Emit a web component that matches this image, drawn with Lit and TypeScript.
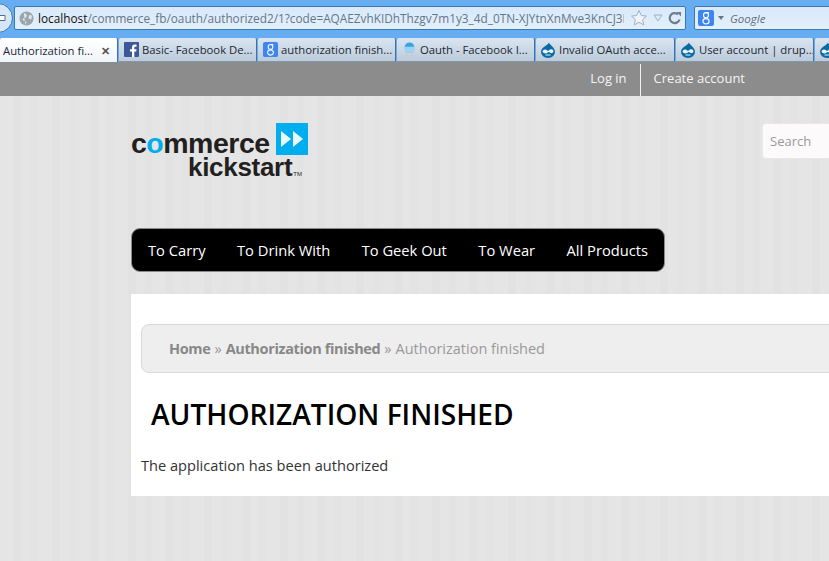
import { LitElement, css, html, svg } from 'lit';
import { customElement } from 'lit/decorators.js';

const facebookIcon = html`<svg class="fav" viewBox="0 0 16 16"><rect width="16" height="16" rx="1" fill="#3b5998"/><path d="M11 16V10h2l.4-2.400H11V6.200c0-.8.3-1.200 1.200-1.200h1.200V2.800c-.5-.1-1.200-.1-1.900-.1-1.900 0-3 1.100-3 3.100v1.800H6.400V10h2.100v6z" fill="#fff"/></svg>`;

const googleIcon = html`<svg class="fav" viewBox="0 0 16 16"><rect width="16" height="16" rx="2" fill="#3f85f0"/><ellipse cx="8" cy="5.200" rx="2.500" ry="2.600" fill="none" stroke="#fff" stroke-width="1.100"/><ellipse cx="8" cy="11.300" rx="3.100" ry="2.700" fill="none" stroke="#fff" stroke-width="1.100"/><path d="M8 2.600h3" stroke="#fff" stroke-width="1"/></svg>`;

const cartIcon = html`<svg class="fav" viewBox="0 0 16 16"><path d="M3 5a5 4.500 0 0 1 10 0l-1 6H4z" fill="#35a3e0"/><path d="M2 5h12l-1.500 6h-9z" fill="#9fd4f0"/><path d="M4 12.500h8" stroke="#c9d3dc"/><circle cx="5" cy="14.500" r="1.200" fill="#c2cad2"/><circle cx="11" cy="14.500" r="1.200" fill="#c2cad2"/></svg>`;

const drupalIcon = html`<svg class="fav drupal" viewBox="0 0 16 16"><path d="M9 .5c.3 2.500 6 4.500 6 9.500a7 6 0 0 1-14 0C1 5 8 3.500 9 .5z" fill="#0a6aa3"/><path d="M2.500 10c0-2 2-3.300 3.700-2.200L8 9l2-1.400c2-1 3.800.6 3.500 2.400-.9 1.300-2.500 1.500-3.500.5-.8-.7-1.500-.7-2.200 0-1.200 1.200-4 1.300-5.300-.5z" fill="#e8f2f8"/><path d="M5.500 13h5" stroke="#e8f2f8" stroke-width="1.200"/></svg>`;

const tabs = [
  { title: 'Basic- Facebook De...', icon: facebookIcon, width: 139 },
  { title: 'authorization finish...', icon: googleIcon, width: 139 },
  { title: 'Oauth - Facebook I...', icon: cartIcon, width: 139 },
  { title: 'Invalid OAuth acce...', icon: drupalIcon, width: 140 },
  { title: 'User account | drup...', icon: drupalIcon, width: 139 },
  { title: '', icon: drupalIcon, width: 40 },
];

const menu = ['To Carry', 'To Drink With', 'To Geek Out', 'To Wear', 'All Products'];

@customElement('app-root')
export class AppRoot extends LitElement {
  static override styles = css`
    :host {
      display: block;
      width: 829px;
      height: 561px;
      overflow: hidden;
      font-family: 'Open Sans', 'Liberation Sans', sans-serif;
      background: repeating-linear-gradient(90deg, #e5e5e5 0 14px, #e2e2e2 14px 22px, #e5e5e5 22px 31px, #e3e3e3 31px 38px);
    }

    /* browser chrome */
    .toolbar {
      height: 38px;
      box-sizing: border-box;
      padding: 6px 0 0 14px;
      display: flex;
      gap: 8px;
      background: #66aef1;
      position: relative;
      overflow: hidden;
    }
    .back {
      position: absolute;
      left: -17px;
      top: 3px;
      width: 30px;
      height: 30px;
      box-sizing: border-box;
      border-radius: 50%;
      border: 1px solid #3f78ad;
      background: #d5e6f7;
      display: flex;
      align-items: center;
      justify-content: center;
    }
    .address,
    .websearch {
      height: 24px;
      box-sizing: border-box;
      border: 1px solid #3b78ad;
      border-radius: 2px;
      background: linear-gradient(#d9e9f9, #e4f0fb);
      display: flex;
      align-items: center;
    }
    .address {
      width: 672px;
      padding: 0 4px;
      flex: none;
    }
    .globe {
      flex: none;
      margin-right: 4px;
    }
    .url {
      flex: none;
      width: 586px;
      overflow: hidden;
      white-space: nowrap;
      font-size: 11.800px;
      color: #64778a;
    }
    .url b {
      font-weight: 400;
      color: #111;
    }
    .url-icons {
      display: flex;
      align-items: center;
      gap: 5px;
      margin-left: 6px;
    }
    .websearch {
      flex: 1;
      margin-right: -4px;
      padding-left: 3px;
      gap: 4px;
    }
    .websearch .fav {
      width: 16px;
      height: 16px;
    }
    .caret {
      width: 0;
      height: 0;
      border: 3px solid transparent;
      border-top: 4px solid #66788a;
      border-bottom: 0;
    }
    .websearch i {
      margin-left: 2px;
      font-size: 11.500px;
      color: #5f6f7f;
    }
    .tabstrip {
      height: 24px;
      display: flex;
      background: #66aef1;
      overflow: hidden;
    }
    .tab {
      flex: none;
      box-sizing: border-box;
      height: 24px;
      padding: 0 0 0 5px;
      display: flex;
      align-items: center;
      gap: 3px;
      font-size: 11.300px;
      white-space: nowrap;
      overflow: hidden;
      color: #1c2733;
      background: linear-gradient(#dae5f0, #bccbda);
      border-right: 1px solid #44729c;
      border-bottom: 1px solid #8097ad;
      border-radius: 2px 2px 0 0;
      margin-right: 1px;
    }
    .tab.active {
      width: 118px;
      padding-left: 3px;
      justify-content: space-between;
      background: linear-gradient(#fff, #f0f5fa);
      border-bottom: 0;
    }
    .close {
      margin-right: 7px;
      font-size: 11px;
      font-weight: 700;
      color: #555;
    }
    .fav {
      flex: none;
      width: 15px;
      height: 15px;
    }
    .drupal {
      width: 16px;
      height: 16px;
      margin-left: -1px;
    }

    /* site */
    .userbar {
      height: 34px;
      box-sizing: border-box;
      padding: 2px 71px 0 0;
      background: #8c8c8c;
      display: flex;
      justify-content: flex-end;
      font-size: 13px;
      color: #f4f4f4;
    }
    .userbar a {
      display: flex;
      align-items: center;
      padding: 0 13px 5px;
    }
    .userbar a + a {
      border-left: 1px solid #f2f2f2;
    }
    .header {
      height: 132px;
      box-sizing: border-box;
      padding: 27px 0 0 131px;
      display: flex;
      justify-content: space-between;
      align-items: flex-start;
    }
    .logo {
      display: grid;
      grid-template-columns: auto auto;
      width: 177px;
      font-family: 'Liberation Sans', Arial, sans-serif;
      font-weight: 700;
      color: #231f20;
    }
    .logo .commerce {
      margin-top: 5px;
      font-size: 28.500px;
      line-height: 30px;
      letter-spacing: -0.500px;
    }
    .logo .commerce span {
      color: #00aeef;
    }
    .logo svg {
      justify-self: end;
      width: 32px;
      height: 32px;
    }
    .logo .kickstart {
      grid-column: 1 / 3;
      margin: -5px 0 0 57px;
      font-size: 26px;
      line-height: 28px;
      letter-spacing: -0.300px;
    }
    .logo sup {
      font-size: 6px;
      font-weight: 400;
      letter-spacing: 0;
      margin-left: 1px;
      vertical-align: baseline;
    }
    .search {
      flex: none;
      width: 67px;
      height: 36px;
      box-sizing: border-box;
      padding-left: 7px;
      display: flex;
      align-items: center;
      font-size: 13px;
      color: #999;
      background: #fcfafb;
      border: 1px solid #e8e8e8;
      border-right: 0;
      border-radius: 4px 0 0 4px;
    }
    .menu {
      margin-left: 131px;
      width: 534px;
      height: 44px;
      box-sizing: border-box;
      padding-left: 16px;
      display: flex;
      align-items: center;
      gap: 31.500px;
      background: #000;
      border: 1px solid #8a8a8a;
      border-radius: 9px;
      color: #fff;
      font-size: 14.700px;
      white-space: nowrap;
    }
    .content {
      margin: 22px 0 0 131px;
      height: 202px;
      box-sizing: border-box;
      padding: 30px 0 0 10px;
      background: #fff;
      color: #333;
    }
    .breadcrumb {
      width: 720px;
      height: 49px;
      box-sizing: border-box;
      padding-left: 27px;
      display: flex;
      align-items: center;
      gap: 4px;
      white-space: pre;
      font-size: 14.500px;
      color: #999;
      background: #eee;
      border: 1px solid #d9d9d9;
      border-radius: 8px;
    }
    .breadcrumb b {
      color: #888;
      letter-spacing: -0.360px;
    }
    h1 {
      margin: 23px 0 0 10px;
      font-size: 28.100px;
      line-height: 37px;
      font-weight: 600;
      color: #000;
      text-transform: uppercase;
      white-space: nowrap;
    }
    p {
      margin: 22px 0 0;
      font-size: 14.600px;
      line-height: 20px;
    }
  `;

  override render() {
    return html`
      <div class="toolbar">
        <div class="back">
          <svg width="16" height="14" viewBox="0 0 16 14"><path d="M7 1 1 7l6 6V9.500h8v-5H7z" fill="#fff" stroke="#4a6f92"/></svg>
        </div>
        <div class="address">
          <svg class="globe" width="15" height="15" viewBox="0 0 16 16">
            <circle cx="8" cy="8" r="7.500" fill="#9aa5ae"/>
            <path d="M5 2c3 1 4 2 3 4S4 7 4 9s3 1 4 3l-1 3.300M11 4l3 1-1 4-3-1z" fill="#dfe6ec"/>
          </svg>
          <div class="url"><b>localhost</b>/commerce_fb/oauth/authorized2/1?code=AQAEZvhKIDhThzgv7m1y3_4d_0TN-XJYtnXnMve3KnCJ3IW</div>
          <div class="url-icons">
            <svg width="18" height="18" viewBox="0 0 18 18"><path d="m9 1.500 2.300 5 5.200.6-3.800 3.500 1 5.300L9 13.300l-4.700 2.600 1-5.300L1.500 7.100l5.200-.6z" fill="#eef4fa" stroke="#9fb0bf"/></svg>
            <svg width="10" height="8" viewBox="0 0 10 8"><path d="M1 1h8L5 7z" fill="none" stroke="#9fb0bf"/></svg>
            <svg width="14" height="14" viewBox="0 0 14 14"><path d="M11.500 8.500A5 5 0 1 1 10 3.300" fill="none" stroke="#6d7d8c" stroke-width="2.200"/><path d="M8.500 1H13v4.500z" fill="#6d7d8c"/></svg>
          </div>
        </div>
        <div class="websearch">
          ${googleIcon}
          <span class="caret"></span>
          <i>Google</i>
        </div>
      </div>
      <div class="tabstrip">
        <div class="tab active"><span>Authorization fi...</span><span class="close">✕</span></div>
        ${tabs.map(
          (t) => html`<div class="tab" style="width:${t.width - 1}px">${t.icon}<span>${t.title}</span></div>`
        )}
      </div>
      <div class="userbar">
        <a>Log in</a>
        <a>Create account</a>
      </div>
      <div class="header">
        <div class="logo">
          <div class="commerce">c<span>o</span>mmerce</div>
          ${svg`<svg viewBox="0 0 32 32"><rect width="32" height="32" fill="#00aeef"/><path d="M5 8l10 8-10 8zM17 8l10 8-10 8z" fill="#fff" opacity=".92"/></svg>`}
          <div class="kickstart">kickstart<sup>TM</sup></div>
        </div>
        <div class="search">Search</div>
      </div>
      <nav class="menu">${menu.map((m) => html`<span>${m}</span>`)}</nav>
      <main class="content">
        <div class="breadcrumb"><b>Home</b><span>»</span><b>Authorization finished</b><span>»</span><span>Authorization finished</span></div>
        <h1>Authorization finished</h1>
        <p>The application has been authorized</p>
      </main>
    `;
  }
}
